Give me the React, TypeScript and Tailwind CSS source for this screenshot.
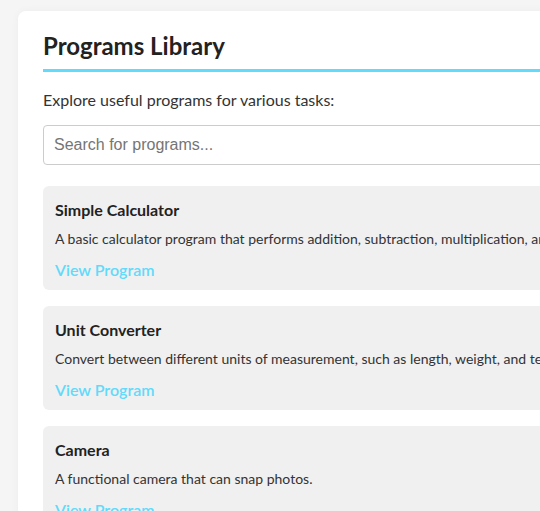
const programs = [
  {
    name: 'Simple Calculator',
    description:
      'A basic calculator program that performs addition, subtraction, multiplication, and division.',
  },
  {
    name: 'Unit Converter',
    description:
      'Convert between different units of measurement, such as length, weight, and temperature.',
  },
  {
    name: 'Camera',
    description: 'A functional camera that can snap photos.',
  },
];

export default function App() {
  return (
    <div className="h-[511px] overflow-hidden bg-[#f5f5f5] pl-[18px] pt-[11px] font-['Lato',sans-serif] text-[#222]">
      <div className="w-[800px] rounded-lg bg-white px-[25px] pt-[19px] pb-6 shadow-[0_0_8px_rgba(0,0,0,0.04)]">
        <h2 className="border-b-[3px] border-[#61dafb] pb-[7px] text-[24px] leading-[32px] font-bold text-[#222]">
          Programs Library
        </h2>
        <p className="mt-[16px] text-[16px] leading-[24px] text-[#333]">
          Explore useful programs for various tasks:
        </p>
        <input
          type="text"
          placeholder="Search for programs..."
          className="mt-[13px] h-10 w-full rounded border border-[#ccc] px-[10px] font-['Liberation_Sans',Arial,sans-serif] text-[16px] placeholder:text-[#757575] focus:outline-none"
        />
        <div className="mt-[21px] flex flex-col gap-4">
          {programs.map((p) => (
            <div key={p.name} className="rounded-md bg-[#f0f0f0] px-3 pt-3 pb-2">
              <h3 className="text-[16px] leading-6 font-bold text-[#222]">{p.name}</h3>
              <p className="mt-[7px] whitespace-nowrap text-[14px] leading-5 text-[#333]">
                {p.description}
              </p>
              <a href="#" className="mt-[9px] block text-[16px] leading-6 font-semibold text-[#61dafb]">
                View Program
              </a>
            </div>
          ))}
        </div>
      </div>
    </div>
  );
}
